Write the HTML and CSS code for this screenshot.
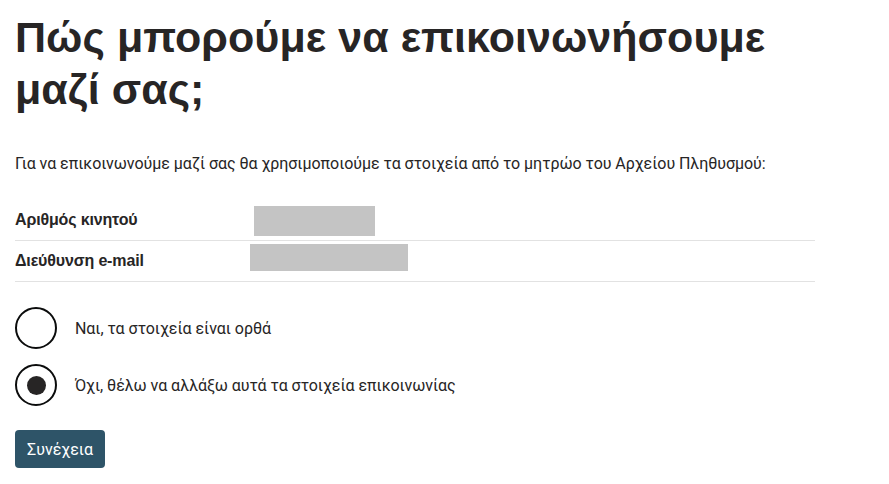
FILE: index.html
```html
<!DOCTYPE html>
<html lang="el">
<head>
<meta charset="utf-8">
<title>Επικοινωνία</title>
<link rel="stylesheet" href="styles.css">
</head>
<body>
<main class="page">
  <h1 class="title">Πώς μπορούμε να επικοινωνήσουμε μαζί σας;</h1>
  <p class="intro">Για να επικοινωνούμε μαζί σας θα χρησιμοποιούμε τα στοιχεία από το μητρώο του Αρχείου Πληθυσμού:</p>
  <dl class="summary">
    <div class="row">
      <dt class="key">Αριθμός κινητού</dt>
      <dd class="value"><span class="redact redact-phone"></span></dd>
    </div>
    <div class="row">
      <dt class="key">Διεύθυνση e-mail</dt>
      <dd class="value"><span class="redact redact-email"></span></dd>
    </div>
  </dl>
  <div class="radios">
    <label class="radio">
      <input type="radio" name="ok" class="radio-input">
      <span class="radio-mark"></span>
      <span class="radio-label">Ναι, τα στοιχεία είναι ορθά</span>
    </label>
    <label class="radio">
      <input type="radio" name="ok" class="radio-input" checked>
      <span class="radio-mark"></span>
      <span class="radio-label">Όχι, θέλω να αλλάξω αυτά τα στοιχεία επικοινωνίας</span>
    </label>
  </div>
  <button class="btn" type="button">Συνέχεια</button>
</main>
</body>
</html>
```
FILE: styles.css
```css
html, body {
  margin: 0;
  padding: 0;
  background: #fff;
}
body {
  font-family: Roboto, "Noto Sans", sans-serif;
  color: #272525;
  letter-spacing: -0.05px;
}
.page {
  padding: 0 15px;
}
.title {
  font-family: "Liberation Sans", Arial, sans-serif;
  font-weight: 700;
  font-size: 43px;
  line-height: 52px;
  letter-spacing: 0.05px;
  margin: 11px 0 0;
  color: #272525;
  max-width: 800px;
}
.intro {
  font-size: 16px;
  line-height: 24px;
  margin: 37px 0 0;
  color: #272525;
}
.summary {
  margin: 24px 0 0;
  width: 800px;
}
.row {
  display: flex;
  align-items: flex-start;
  border-bottom: 1px solid #e2e2e2;
  height: 40px;
}
.key {
  font-family: "Liberation Sans", Arial, sans-serif;
  font-weight: 700;
  font-size: 16px;
  line-height: 24px;
  letter-spacing: -0.15px;
  padding-top: 8px;
  width: 235px;
  margin: 0;
}
.value {
  margin: 0;
  display: flex;
}
.redact {
  display: block;
  background: #c4c4c4;
}
.redact-phone {
  width: 121px;
  height: 30px;
  margin: 6px 0 0 4px;
}
.redact-email {
  width: 158px;
  height: 27px;
  margin-top: 3px;
}
.radios {
  margin-top: 25px;
  display: flex;
  flex-direction: column;
  gap: 15px;
}
.radio {
  display: flex;
  align-items: center;
  gap: 18px;
  cursor: pointer;
}
.radio-input {
  position: absolute;
  opacity: 0;
  width: 0;
  height: 0;
}
.radio-mark {
  box-sizing: border-box;
  width: 42px;
  height: 42px;
  border: 2px solid #0b0c0c;
  border-radius: 50%;
  display: flex;
  align-items: center;
  justify-content: center;
  flex: none;
}
.radio-input:checked + .radio-mark::after {
  content: "";
  width: 19px;
  height: 19px;
  border-radius: 50%;
  background: #272525;
}
.radio-label {
  font-size: 16px;
  color: #272525;
}
.btn {
  display: block;
  margin-top: 24px;
  background: #2e5468;
  color: #fff;
  border: 0;
  border-radius: 4px;
  font-family: Roboto, "Noto Sans", sans-serif;
  font-size: 16px;
  padding: 0;
  height: 38px;
  width: 90px;
  cursor: pointer;
}
```
